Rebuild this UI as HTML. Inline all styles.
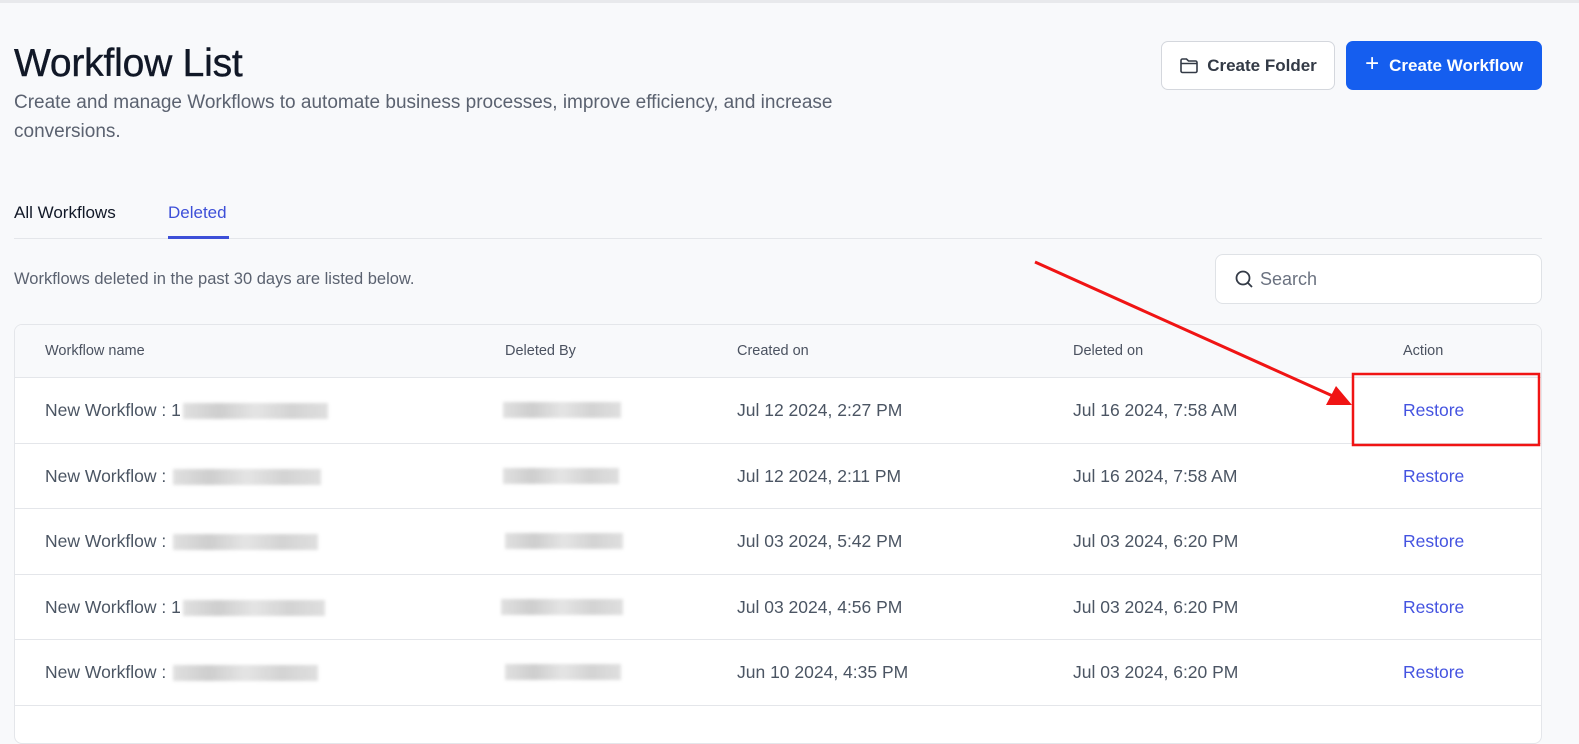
<!DOCTYPE html>
<html><head><meta charset="utf-8">
<style>
*{box-sizing:border-box;margin:0;padding:0}
body{width:1579px;height:728px;overflow:hidden;background:#f8f9fb;font-family:"Liberation Sans",sans-serif;color:#111827;position:relative}
.topline{position:absolute;left:0;top:0;width:1579px;height:3px;background:#e8e9ec}
h1{position:absolute;left:14px;top:42px;font-size:39px;font-weight:400;color:#111827;letter-spacing:-0.2px;-webkit-text-stroke:0.4px #111827}
.sub{position:absolute;left:14px;top:88px;width:925px;font-size:19px;line-height:29px;color:#5b6270}
.btn{position:absolute;top:41px;height:49px;border-radius:7px;display:flex;align-items:center;justify-content:center;font-size:17px;font-weight:700}
.b1{left:1161px;width:174px;background:#fff;border:1px solid #d4d7dd;color:#333a46}
.b2{left:1346px;width:196px;background:#155eef;color:#fff}
.tabs{position:absolute;left:14px;top:238px;width:1528px;height:1px;background:#e4e6ea}
.tab{position:absolute;top:203px;font-size:17px}
.t1{left:14px;color:#111827}
.t2{left:168px;color:#3d4fd8}
.tul{position:absolute;left:168px;top:236px;width:61px;height:3px;background:#3d4fd8}
.note{position:absolute;left:14px;top:270px;font-size:16.5px;color:#5b6270}
.search{position:absolute;left:1215px;top:254px;width:327px;height:50px;background:#fff;border:1px solid #dfe2e6;border-radius:8px;font-size:18px;color:#6b7280;display:flex;align-items:center;padding-left:18px;gap:6px}
.table{position:absolute;left:14px;top:324px;width:1528px;height:420px;background:#fff;border:1px solid #e4e6ea;border-radius:8px;overflow:hidden}
.head{height:53px;background:#f8f9fb;border-bottom:1px solid #e4e6ea;position:relative}
.head span{position:absolute;top:18px;font-size:14.5px;color:#4b5260}
.row{height:65.5px;border-bottom:1px solid #e4e6ea;position:relative}
.row > span{position:absolute;top:22px;font-size:17.5px;color:#4b5563;white-space:nowrap}
.c1{left:30px}.c2{left:490px}.c3{left:722px}.c4{left:1058px}.c5{left:1388px}
.row .c5{color:#4453e0}
.blur{display:inline-block;vertical-align:middle;height:16px;background:linear-gradient(90deg,#ddd,#c9c9c9,#e2e2e2,#cfcfcf,#dcdcdc);filter:blur(1.5px);opacity:.9}
.b2b{position:absolute;top:24px}
</style></head><body>
<div class="topline"></div>
<h1>Workflow List</h1>
<div class="sub">Create and manage Workflows to automate business processes, improve efficiency, and increase conversions.</div>
<div class="btn b1"><svg width="20" height="18" viewBox="0 0 20 18" style="margin-right:8px"><path d="M2 3.5a1.5 1.5 0 0 1 1.5-1.5h4l2 2h7a1.5 1.5 0 0 1 1.5 1.5v8.5a1.5 1.5 0 0 1-1.5 1.5h-13A1.5 1.5 0 0 1 2 14z M2 6.5h16" fill="none" stroke="#333a46" stroke-width="1.6"/></svg>Create Folder</div>
<div class="btn b2"><span style="font-weight:300;font-size:24px;margin-right:10px;margin-top:-3px">+</span>Create Workflow</div>
<div class="tab t1">All Workflows</div>
<div class="tab t2">Deleted</div>
<div class="tabs"></div><div class="tul"></div>
<div class="note">Workflows deleted in the past 30 days are listed below.</div>
<div class="search"><svg width="20" height="20" viewBox="0 0 20 20"><circle cx="9" cy="9" r="6.5" fill="none" stroke="#333a46" stroke-width="1.8"/><path d="M14 14l4 4" stroke="#333a46" stroke-width="1.8"/></svg>Search</div>
<div class="table">
<div class="head"><span class="c1">Workflow name</span><span class="c2">Deleted By</span><span class="c3">Created on</span><span class="c4">Deleted on</span><span class="c5">Action</span></div>
<div class="row"><span class="c1">New Workflow : 1<span class="blur" style="width:145px;margin-left:2px"></span></span><div class="blur b2b" style="left:488px;width:118px"></div><span class="c3">Jul 12 2024, 2:27 PM</span><span class="c4">Jul 16 2024, 7:58 AM</span><span class="c5">Restore</span></div>
<div class="row"><span class="c1">New Workflow : <span class="blur" style="width:148px;margin-left:2px"></span></span><div class="blur b2b" style="left:488px;width:116px"></div><span class="c3">Jul 12 2024, 2:11 PM</span><span class="c4">Jul 16 2024, 7:58 AM</span><span class="c5">Restore</span></div>
<div class="row"><span class="c1">New Workflow : <span class="blur" style="width:145px;margin-left:2px"></span></span><div class="blur b2b" style="left:490px;width:118px"></div><span class="c3">Jul 03 2024, 5:42 PM</span><span class="c4">Jul 03 2024, 6:20 PM</span><span class="c5">Restore</span></div>
<div class="row"><span class="c1">New Workflow : 1<span class="blur" style="width:142px;margin-left:2px"></span></span><div class="blur b2b" style="left:486px;width:122px"></div><span class="c3">Jul 03 2024, 4:56 PM</span><span class="c4">Jul 03 2024, 6:20 PM</span><span class="c5">Restore</span></div>
<div class="row"><span class="c1">New Workflow : <span class="blur" style="width:145px;margin-left:2px"></span></span><div class="blur b2b" style="left:490px;width:116px"></div><span class="c3">Jun 10 2024, 4:35 PM</span><span class="c4">Jul 03 2024, 6:20 PM</span><span class="c5">Restore</span></div>
</div>
<svg style="position:absolute;left:0;top:0" width="1579" height="728">
<line x1="1035" y1="262" x2="1335" y2="397" stroke="#f01414" stroke-width="3"/>
<polygon points="1352,405 1326,405 1336,386" fill="#f01414"/>
<rect x="1353" y="374" width="186" height="71" fill="none" stroke="#f01414" stroke-width="2.5"/>
</svg>
</body></html>
